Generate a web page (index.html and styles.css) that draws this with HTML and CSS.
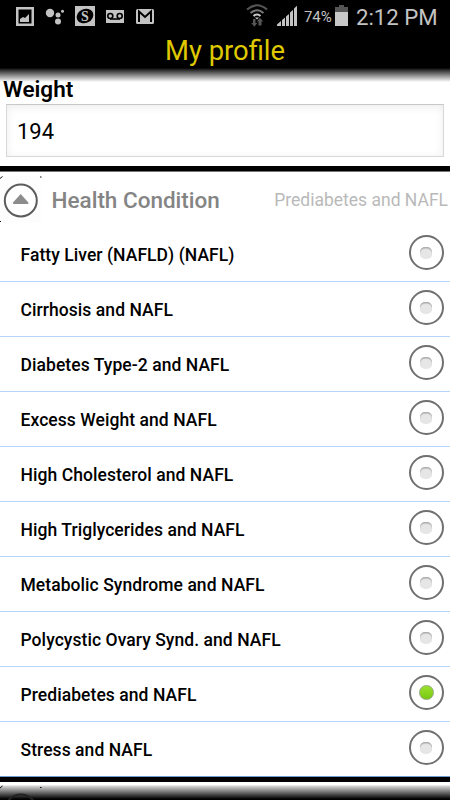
FILE: index.html
```html
<!DOCTYPE html>
<html lang="en">
<head>
<meta charset="utf-8">
<title>My profile</title>
<link rel="stylesheet" href="styles.css">
</head>
<body>
<div class="screen">
  <header class="top">
    <div class="status">
      <svg class="notifications" width="160" height="34" viewBox="0 0 160 34" fill="#c3c3c3">
        <path fill-rule="evenodd" d="M16 7h18v19H16zM18.500 9.500v14h13v-14z"/>
        <path d="M20 22v-3l3-2 2 1 4-4v8z"/>
        <circle cx="50" cy="13" r="4.200"/><circle cx="58" cy="15" r="2.500"/><circle cx="62.500" cy="11.300" r="1.500"/><circle cx="58" cy="21.500" r="3"/>
        <rect x="75" y="6" width="20" height="20"/>
        <ellipse cx="85" cy="16" rx="8.600" ry="7" fill="#000" transform="rotate(-25 85 16)"/>
        <text class="s-mark" x="85" y="21" text-anchor="middle">S</text>
        <rect x="106" y="10" width="18" height="13"/>
        <g fill="none" stroke="#000" stroke-width="1.600"><circle cx="110.300" cy="16" r="2.500"/><circle cx="119.700" cy="16" r="2.500"/><path d="M110 19h10"/></g>
        <rect x="136" y="9" width="18" height="15" rx="1.500"/>
        <path d="M139 22V11.500l6 5.500 6-5.500V22" fill="none" stroke="#000" stroke-width="2"/>
      </svg>
      <svg class="signals" width="56" height="34" viewBox="245 0 56 34">
        <g fill="none" stroke-width="2.100"><path d="M247 9.500q10-8.500 20 0" stroke="#555"/><path d="M250.500 13q6.500-5.500 13 0" stroke="#777"/><path d="M253.500 16q3.700-3 7 0" stroke="#c8c8c8"/></g>
        <path d="M255 17.500h4l-2 2z" fill="#c8c8c8"/>
        <path d="M253 19h2.500v4h1.800l-3 3.800-3-3.800H253zM258.500 25.500v-4h-1.700l3.200-3.800 3.200 3.800h-1.700v4z" fill="#555"/>
        <path d="M277 26v-1.500l4-3.500V26zM282 26v-6l3-2.500V26zM286 26v-9.500l3-2.500v12zM290 26V12.500l3-2.500v16zM294 26V8.500l3-2.700V26z" fill="#c3c3c3"/>
      </svg>
      <span class="percent">74%</span>
      <svg class="battery" width="13" height="34" viewBox="0 0 13 34"><path d="M4 5h5v2h4v5H0V7h4z" fill="#555"/><path d="M0 12h13v14H0z" fill="#c8c8c8"/></svg>
      <span class="clock">2:12 PM</span>
    </div>
    <h1 class="title">My profile</h1>
  </header>
  <main>
    <section class="weight">
      <label class="weight-label" for="weight">Weight</label>
      <input class="weight-input" id="weight" value="194">
    </section>
    <section class="conditions">
      <div class="group-head">
        <svg class="collapse" width="42" height="51" viewBox="0 0 42 51">
          <path d="M0 4h41v47H0z" fill="#fdfdfd"/>
          <path d="M0 6.500l2.500-2M40 5h1.500M0 49.500h1" stroke="#111" fill="none"/>
          <circle cx="20.800" cy="28.500" r="16" fill="#fff" stroke="#5c5c5c" stroke-width="2"/>
          <path d="M13 30.500l7.700-8.500 7.600 8.500q.5 1.500-1 1.500H14q-1.500 0-1-1.500z" fill="#8c8c8c"/>
        </svg>
        <h2 class="group-title">Health Condition</h2>
        <span class="group-value">Prediabetes and NAFL</span>
      </div>
      <ul class="options">
        <li class="option"><span>Fatty Liver (NAFLD) (NAFL)</span><i class="radio"></i></li>
        <li class="option"><span>Cirrhosis and NAFL</span><i class="radio"></i></li>
        <li class="option"><span>Diabetes Type-2 and NAFL</span><i class="radio"></i></li>
        <li class="option"><span>Excess Weight and NAFL</span><i class="radio"></i></li>
        <li class="option"><span>High Cholesterol and NAFL</span><i class="radio"></i></li>
        <li class="option"><span>High Triglycerides and NAFL</span><i class="radio"></i></li>
        <li class="option"><span>Metabolic Syndrome and NAFL</span><i class="radio"></i></li>
        <li class="option"><span>Polycystic Ovary Synd. and NAFL</span><i class="radio"></i></li>
        <li class="option"><span>Prediabetes and NAFL</span><i class="radio selected"></i></li>
        <li class="option"><span>Stress and NAFL</span><i class="radio"></i></li>
      </ul>
    </section>
    <div class="next-group">
      <svg width="42" height="18" viewBox="0 0 42 18"><path d="M0 6l2.500-2M40 5.500h1.500" stroke="#111"/><circle cx="20.800" cy="28.500" r="16" fill="none" stroke="#222" stroke-width="2"/></svg>
    </div>
  </main>
</div>
</body>
</html>
```

FILE: styles.css
```css
* { box-sizing: border-box; }
body { margin: 0; background: #fff; font-family: Roboto, "Liberation Sans", sans-serif; }
.screen { width: 450px; height: 800px; overflow: hidden; background: #fff; }
.top { height: 82px; background: linear-gradient(#000 68px, #2c2c2c 70px, #fff 82px); }
.status { display: flex; height: 34px; color: #c3c3c3; line-height: 34px; white-space: nowrap; }
.status svg { flex: none; display: block; }
.notifications { margin-right: 85px; }
.s-mark { font: bold 14px "Liberation Serif", serif; fill: #c3c3c3; }
.percent { width: 31px; margin-left: 3px; font-size: 15px; letter-spacing: -0.1px; }
.battery { margin-right: 8px; }
.clock { font-size: 22.2px; }
.title { margin: 0; height: 34px; line-height: 35px; font-size: 27.4px; font-weight: 400; color: #dfc800; text-align: center; }
.weight { height: 84px; padding: 0 6px; }
.weight-label { display: block; height: 22px; margin-left: -3px; line-height: 15px; font-size: 22.5px; font-weight: 600; color: #000; }
.weight-input { display: block; width: 438px; height: 53px; padding: 2px 10px 0; border: 1px solid #d8d8d8; border-top-color: #c8c8c8; border-radius: 0; box-shadow: inset 0 2px 8px #ececec; background: #fff; color: #000; font: 22px Roboto, sans-serif; outline: 0; }
.conditions { border-top: 5px solid #000; border-bottom: 5px solid #000; }
.group-head { display: flex; align-items: center; height: 56px; padding-right: 2px; border-top: 1px solid #777; }
.collapse { align-self: flex-start; flex: none; }
.group-title { margin: 0 0 0 9.500px; font-size: 22.5px; font-weight: 500; color: #848484; white-space: nowrap; }
.group-value { margin: 1px 0 0 auto; font-size: 17.5px; color: #b9b9b9; white-space: nowrap; }
.options { margin: 0; padding: 0; list-style: none; }
.option { display: flex; align-items: center; justify-content: space-between; height: 55px; padding: 0 6.500px 0 20px; border-bottom: 1px solid #b5d6f8; font-size: 17.5px; font-weight: 500; letter-spacing: 0.06px; color: #000; }
.option span { padding: 2px 0 0 0.5px; }
.option:last-child { border-bottom-color: #6d9dce; }
.radio { display: flex; align-items: center; justify-content: center; width: 35px; height: 35px; margin-bottom: 3px; border: 2px solid #707070; border-radius: 50%; }
.radio::before { content: ""; width: 12px; height: 12px; border-radius: 5px; background: #e6e6e6; box-shadow: inset 0 1.500px 1px #aaa; }
.radio.selected::before { width: 13px; height: 13px; border: 1px solid #94a580; border-radius: 50%; background: linear-gradient(#9be12e, #78c810); box-shadow: none; }
.next-group { height: 18px; background: linear-gradient(#fff 3px, #d5d5d5 4px, #000 17px); }
.next-group svg { display: block; }
```
